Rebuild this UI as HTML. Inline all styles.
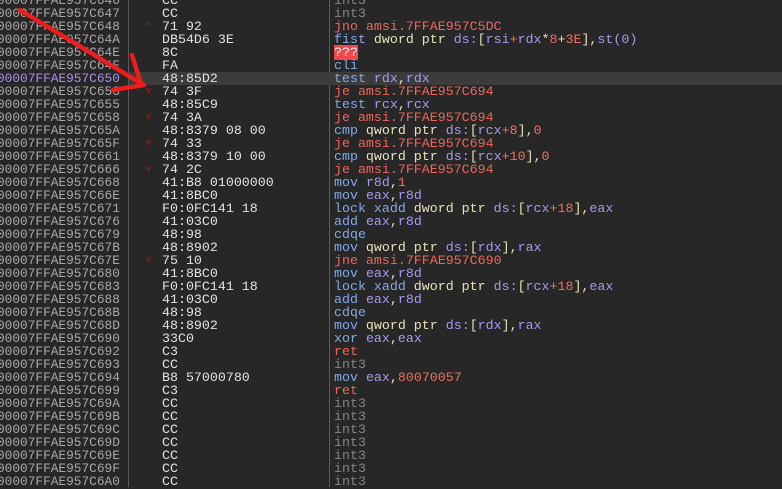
<!DOCTYPE html>
<html><head><meta charset="utf-8"><style>
body{margin:0;width:782px;height:487px;background:#272727;overflow:hidden;position:relative;font-family:"Liberation Mono",monospace;font-size:13.3px;}
.r{position:absolute;left:0;width:782px;height:13px;line-height:13px;white-space:pre;}
.hl{position:absolute;left:129px;right:0;top:0;bottom:0;background:#3c3c3c;}
.a{position:absolute;left:-3px;color:#a8a8a8;font-size:12.8px;}
.b{position:absolute;left:162px;color:#e2e2e2;}
.d{position:absolute;left:334px;color:#e8e0b8;}
.k{position:absolute;left:146px;color:#c01818;font-size:9px;}
.bl{color:#80aaec}.rg{color:#a898f0}.n{color:#f0705a}.j{color:#f0665a}.g{color:#858585}
.q{background:#f04848;color:#f0f0f0}
.v1{position:absolute;left:128px;top:0;width:1px;height:487px;background:#5a5a5a}
.v2{position:absolute;left:329px;top:0;width:1px;height:487px;background:#5a5a5a}
</style></head><body>
<div class="v1"></div><div class="v2"></div>
<div class="r" style="top:-6px"><span class="a">00007FFAE957C646</span><span class="b">CC</span><span class="d g">int3</span></div>
<div class="r" style="top:7px"><span class="a">00007FFAE957C647</span><span class="b">CC</span><span class="d g">int3</span></div>
<div class="r" style="top:20px"><span class="a">00007FFAE957C648</span><span class="k">^</span><span class="b">71 92</span><span class="d j">jno amsi.7FFAE957C5DC</span></div>
<div class="r" style="top:33px"><span class="a">00007FFAE957C64A</span><span class="b">DB54D6 3E</span><span class="d"><span class="bl">fist</span> dword ptr <span class="rg">ds:</span>[<span class="rg">rsi</span><span class="n">+</span><span class="rg">rdx</span>*<span class="n">8</span>+<span class="n">3E</span>],<span class="rg">st(0)</span></span></div>
<div class="r" style="top:46px"><span class="a">00007FFAE957C64E</span><span class="b">8C</span><span class="d"><span class="q">???</span></span></div>
<div class="r" style="top:59px"><span class="a">00007FFAE957C64F</span><span class="b">FA</span><span class="d bl">cli</span></div>
<div class="r" style="top:72px"><div class="hl"></div><span class="a" style="color:#a890e8">00007FFAE957C650</span><span class="b">48:85D2</span><span class="d"><span class="bl">test</span> <span class="rg">rdx</span>,<span class="rg">rdx</span></span></div>
<div class="r" style="top:85px"><span class="a">00007FFAE957C653</span><span class="k">v</span><span class="b">74 3F</span><span class="d j">je amsi.7FFAE957C694</span></div>
<div class="r" style="top:98px"><span class="a">00007FFAE957C655</span><span class="b">48:85C9</span><span class="d"><span class="bl">test</span> <span class="rg">rcx</span>,<span class="rg">rcx</span></span></div>
<div class="r" style="top:111px"><span class="a">00007FFAE957C658</span><span class="k">v</span><span class="b">74 3A</span><span class="d j">je amsi.7FFAE957C694</span></div>
<div class="r" style="top:124px"><span class="a">00007FFAE957C65A</span><span class="b">48:8379 08 00</span><span class="d"><span class="bl">cmp</span> qword ptr <span class="rg">ds:</span>[<span class="rg">rcx</span><span class="n">+8</span>],<span class="n">0</span></span></div>
<div class="r" style="top:137px"><span class="a">00007FFAE957C65F</span><span class="k">v</span><span class="b">74 33</span><span class="d j">je amsi.7FFAE957C694</span></div>
<div class="r" style="top:150px"><span class="a">00007FFAE957C661</span><span class="b">48:8379 10 00</span><span class="d"><span class="bl">cmp</span> qword ptr <span class="rg">ds:</span>[<span class="rg">rcx</span><span class="n">+10</span>],<span class="n">0</span></span></div>
<div class="r" style="top:163px"><span class="a">00007FFAE957C666</span><span class="k">v</span><span class="b">74 2C</span><span class="d j">je amsi.7FFAE957C694</span></div>
<div class="r" style="top:176px"><span class="a">00007FFAE957C668</span><span class="b">41:B8 01000000</span><span class="d"><span class="bl">mov</span> <span class="rg">r8d</span>,<span class="n">1</span></span></div>
<div class="r" style="top:189px"><span class="a">00007FFAE957C66E</span><span class="b">41:8BC0</span><span class="d"><span class="bl">mov</span> <span class="rg">eax</span>,<span class="rg">r8d</span></span></div>
<div class="r" style="top:202px"><span class="a">00007FFAE957C671</span><span class="b">F0:0FC141 18</span><span class="d"><span class="bl">lock xadd</span> dword ptr <span class="rg">ds:</span>[<span class="rg">rcx</span><span class="n">+18</span>],<span class="rg">eax</span></span></div>
<div class="r" style="top:215px"><span class="a">00007FFAE957C676</span><span class="b">41:03C0</span><span class="d"><span class="bl">add</span> <span class="rg">eax</span>,<span class="rg">r8d</span></span></div>
<div class="r" style="top:228px"><span class="a">00007FFAE957C679</span><span class="b">48:98</span><span class="d bl">cdqe</span></div>
<div class="r" style="top:241px"><span class="a">00007FFAE957C67B</span><span class="b">48:8902</span><span class="d"><span class="bl">mov</span> qword ptr <span class="rg">ds:</span>[<span class="rg">rdx</span>],<span class="rg">rax</span></span></div>
<div class="r" style="top:254px"><span class="a">00007FFAE957C67E</span><span class="k">v</span><span class="b">75 10</span><span class="d j">jne amsi.7FFAE957C690</span></div>
<div class="r" style="top:267px"><span class="a">00007FFAE957C680</span><span class="b">41:8BC0</span><span class="d"><span class="bl">mov</span> <span class="rg">eax</span>,<span class="rg">r8d</span></span></div>
<div class="r" style="top:280px"><span class="a">00007FFAE957C683</span><span class="b">F0:0FC141 18</span><span class="d"><span class="bl">lock xadd</span> dword ptr <span class="rg">ds:</span>[<span class="rg">rcx</span><span class="n">+18</span>],<span class="rg">eax</span></span></div>
<div class="r" style="top:293px"><span class="a">00007FFAE957C688</span><span class="b">41:03C0</span><span class="d"><span class="bl">add</span> <span class="rg">eax</span>,<span class="rg">r8d</span></span></div>
<div class="r" style="top:306px"><span class="a">00007FFAE957C68B</span><span class="b">48:98</span><span class="d bl">cdqe</span></div>
<div class="r" style="top:319px"><span class="a">00007FFAE957C68D</span><span class="b">48:8902</span><span class="d"><span class="bl">mov</span> qword ptr <span class="rg">ds:</span>[<span class="rg">rdx</span>],<span class="rg">rax</span></span></div>
<div class="r" style="top:332px"><span class="a">00007FFAE957C690</span><span class="b">33C0</span><span class="d"><span class="bl">xor</span> <span class="rg">eax</span>,<span class="rg">eax</span></span></div>
<div class="r" style="top:345px"><span class="a">00007FFAE957C692</span><span class="b">C3</span><span class="d j">ret</span></div>
<div class="r" style="top:358px"><span class="a">00007FFAE957C693</span><span class="b">CC</span><span class="d g">int3</span></div>
<div class="r" style="top:371px"><span class="a">00007FFAE957C694</span><span class="b">B8 57000780</span><span class="d"><span class="bl">mov</span> <span class="rg">eax</span>,<span class="n">80070057</span></span></div>
<div class="r" style="top:384px"><span class="a">00007FFAE957C699</span><span class="b">C3</span><span class="d j">ret</span></div>
<div class="r" style="top:397px"><span class="a">00007FFAE957C69A</span><span class="b">CC</span><span class="d g">int3</span></div>
<div class="r" style="top:410px"><span class="a">00007FFAE957C69B</span><span class="b">CC</span><span class="d g">int3</span></div>
<div class="r" style="top:423px"><span class="a">00007FFAE957C69C</span><span class="b">CC</span><span class="d g">int3</span></div>
<div class="r" style="top:436px"><span class="a">00007FFAE957C69D</span><span class="b">CC</span><span class="d g">int3</span></div>
<div class="r" style="top:449px"><span class="a">00007FFAE957C69E</span><span class="b">CC</span><span class="d g">int3</span></div>
<div class="r" style="top:462px"><span class="a">00007FFAE957C69F</span><span class="b">CC</span><span class="d g">int3</span></div>
<div class="r" style="top:475px"><span class="a">00007FFAE957C6A0</span><span class="b">CC</span><span class="d g">int3</span></div>
<svg style="position:absolute;left:0;top:0" width="782" height="487">
<g stroke="#ee1c1c" stroke-width="4.5" stroke-linecap="round" fill="none">
<path d="M20 10 L142 84"/>
<path d="M132 55 L141 84"/>
<path d="M113 90 L144 85"/>
</g>
</svg>
</body></html>
